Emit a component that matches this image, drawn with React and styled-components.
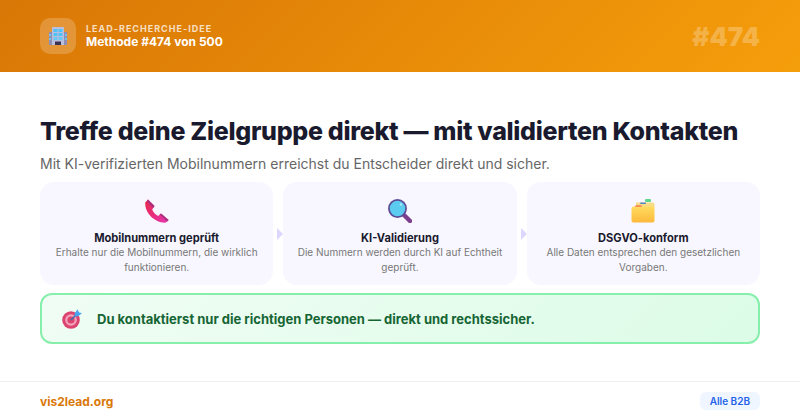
import React from "react";
import styled, { createGlobalStyle } from "styled-components";

const Global = createGlobalStyle`
  * { box-sizing: border-box; }
  html, body { margin: 0; padding: 0; background: #fff; }
  body { font-family: Inter, "Liberation Sans", sans-serif; }
`;

const BuildingIcon = () => (
  <svg width="20" height="20" viewBox="0 0 20 20">
    <rect x="1" y="6" width="18" height="13" fill="#8d8fb5" />
    <rect x="4" y="1" width="12" height="18" rx="0.5" fill="#b9bfdc" />
    <rect x="1" y="8" width="2" height="2" fill="#6fc3ee" />
    <rect x="1" y="12" width="2" height="2" fill="#6fc3ee" />
    <rect x="17" y="8" width="2" height="2" fill="#6fc3ee" />
    <rect x="17" y="12" width="2" height="2" fill="#6fc3ee" />
    <rect x="5.5" y="3" width="4" height="3" fill="#4fc3f7" />
    <rect x="10.5" y="3" width="4" height="3" fill="#4fc3f7" />
    <rect x="5.5" y="7" width="4" height="3" fill="#4fc3f7" />
    <rect x="10.5" y="7" width="4" height="3" fill="#4fc3f7" />
    <rect x="5.5" y="11" width="4" height="3" fill="#6cc9f5" />
    <rect x="10.5" y="11" width="4" height="3" fill="#6cc9f5" />
    <rect x="7" y="15.5" width="6" height="3.5" fill="#3b3350" />
  </svg>
);

const PhoneIcon = () => (
  <svg width="24" height="24" viewBox="0 0 24 24">
    <defs>
      <linearGradient id="phoneFill" x1="0" y1="0" x2="1" y2="1">
        <stop offset="0" stopColor="#e8294a" />
        <stop offset="1" stopColor="#e835b0" />
      </linearGradient>
    </defs>
    <path d="M3 .5L9.5 7 7.2 10.6C8.2 13.4 10.4 15.8 13.2 16.9L16 14.4 23.6 21 21 23.6C10 24.4-.4 14 .2 3.4Z" fill="url(#phoneFill)" />
    <path d="M3 .5L9.5 7 8.2 9 1.8 2.2Z" fill="#a8327f" />
    <path d="M16 14.4L23.6 21 22.2 22.4 14.6 15.6Z" fill="#a8327f" />
  </svg>
);

const SearchIcon = () => (
  <svg width="24" height="24" viewBox="0 0 24 24">
    <path d="M16 16L22 22" stroke="#7b3f8e" strokeWidth="4.4" strokeLinecap="round" />
    <circle cx="9.5" cy="9.5" r="8.6" fill="#5bcbf0" stroke="#5c4a96" strokeWidth="1.7" />
    <circle cx="13" cy="5.5" r="1.2" fill="#a8e6fa" />
  </svg>
);

const FolderIcon = () => (
  <svg width="24" height="24" viewBox="0 0 24 24">
    <defs>
      <linearGradient id="folderFill" x1="0" y1="0" x2="0" y2="1">
        <stop offset="0" stopColor="#ffdc60" />
        <stop offset="1" stopColor="#fdb93c" />
      </linearGradient>
    </defs>
    <rect x="14" y="0" width="6" height="3" rx="1" fill="#5ed68e" />
    <path d="M5 3.5H22a1.5 1.5 0 0 1 1.5 1.5V9H5Z" fill="#f7dc85" />
    <rect x="9" y="3.5" width="6" height="1.6" rx="0.8" fill="#4f86c6" />
    <rect x="4" y="6.5" width="7" height="2" rx="1" fill="#ef4d4d" />
    <path d="M.5 9.5A2 2 0 0 1 2.5 7.5H21.5A2 2 0 0 1 23.5 9.5V21.5A2 2 0 0 1 21.5 23.5H2.5A2 2 0 0 1 .5 21.5Z" fill="url(#folderFill)" />
  </svg>
);

const TargetIcon = () => (
  <svg width="20" height="20" viewBox="0 0 20 20">
    <circle cx="9" cy="11" r="8.8" fill="#dc4470" />
    <circle cx="9" cy="11" r="5.8" fill="#f4a3bb" />
    <circle cx="9" cy="11" r="3.6" fill="#dc4470" />
    <path d="M9 11L15.5 4.5" stroke="#3a6ea5" strokeWidth="1.6" />
    <path d="M12.6 4.4L15.6 .2 16.8 3.2 19.9 4.2 15.8 7.6 12.8 7.2Z" fill="#48a4f0" />
  </svg>
);

const steps = [
  { icon: <PhoneIcon />, title: "Mobilnummern geprüft", text: "Erhalte nur die Mobilnummern, die wirklich funktionieren." },
  { icon: <SearchIcon />, title: "KI-Validierung", text: "Die Nummern werden durch KI auf Echtheit geprüft." },
  { icon: <FolderIcon />, title: "DSGVO-konform", text: "Alle Daten entsprechen den gesetzlichen Vorgaben." },
];

const App = () => {
  return (
    <>
      <Global />
      <S.Page>
        <S.Header>
          <S.HeaderLeft>
            <S.IconBox>
              <BuildingIcon />
            </S.IconBox>
            <div>
              <S.Label>LEAD-RECHERCHE-IDEE</S.Label>
              <S.Method>Methode #474 von 500</S.Method>
            </div>
          </S.HeaderLeft>
          <S.Number>#474</S.Number>
        </S.Header>
        <S.Main>
          <S.Title>Treffe deine Zielgruppe direkt — mit validierten Kontakten</S.Title>
          <S.Sub>Mit KI-verifizierten Mobilnummern erreichst du Entscheider direkt und sicher.</S.Sub>
          <S.Cards>
            {steps.map((s) => (
              <S.Card key={s.title}>
                <S.CardIcon>{s.icon}</S.CardIcon>
                <S.CardTitle>{s.title}</S.CardTitle>
                <S.CardText>{s.text}</S.CardText>
              </S.Card>
            ))}
          </S.Cards>
          <S.Result>
            <TargetIcon />
            <S.ResultText>Du kontaktierst nur die richtigen Personen — direkt und rechtssicher.</S.ResultText>
          </S.Result>
        </S.Main>
        <S.Footer>
          <S.Brand>vis2lead.org</S.Brand>
          <S.Tag>Alle B2B</S.Tag>
        </S.Footer>
      </S.Page>
    </>
  );
};

export default App;

const S = {
  Page: styled.div`
    width: 800px;
    height: 420px;
    display: flex;
    flex-direction: column;
    overflow: hidden;
    background: #fff;
  `,
  Header: styled.header`
    height: 72px;
    padding: 0 40px;
    display: flex;
    align-items: center;
    justify-content: space-between;
    background: linear-gradient(135deg, #d97706, #f59e0b);
  `,
  HeaderLeft: styled.div`
    display: flex;
    align-items: center;
    gap: 10px;
  `,
  IconBox: styled.div`
    width: 36px;
    height: 36px;
    border-radius: 10px;
    background: rgba(255, 255, 255, 0.2);
    display: flex;
    align-items: center;
    justify-content: center;
  `,
  Label: styled.div`
    font-size: 9px;
    font-weight: 700;
    letter-spacing: 1px;
    line-height: 11px;
    color: rgba(255, 255, 255, 0.75);
  `,
  Method: styled.div`
    margin-bottom: 1px;
    font-size: 12px;
    font-weight: 700;
    line-height: 15px;
    color: #fff;
  `,
  Number: styled.div`
    font-size: 26px;
    font-weight: 900;
    color: rgba(255, 255, 255, 0.25);
  `,
  Main: styled.main`
    flex: 1;
    padding: 44px 40px 0;
  `,
  Title: styled.h1`
    margin: 0;
    font-size: 25px;
    font-weight: 800;
    letter-spacing: -0.3px;
    line-height: 30px;
    color: #1a1a2e;
  `,
  Sub: styled.p`
    margin: 8px 0 0;
    font-size: 14px;
    line-height: 20px;
    color: #666;
  `,
  Cards: styled.div`
    margin-top: 8px;
    display: grid;
    grid-template-columns: repeat(3, 1fr);
    gap: 10px;
  `,
  Card: styled.div`
    position: relative;
    height: 103px;
    padding: 17px 14px 0;
    border-radius: 14px;
    background: #f8f7ff;
    text-align: center;
    &:not(:last-child)::after {
      content: "";
      position: absolute;
      right: -10px;
      top: 46px;
      border-left: 6px solid #ddd6fe;
      border-top: 6px solid transparent;
      border-bottom: 6px solid transparent;
    }
  `,
  CardIcon: styled.div`
    height: 24px;
    display: flex;
    justify-content: center;
  `,
  CardTitle: styled.div`
    margin-top: 8px;
    font-size: 11.1px;
    font-weight: 700;
    line-height: 14px;
    color: #1a1a2e;
  `,
  CardText: styled.div`
    font-size: 10px;
    line-height: 14.5px;
    color: #777;
  `,
  Result: styled.div`
    margin-top: 8px;
    height: 51px;
    padding: 0 20px;
    display: flex;
    align-items: center;
    gap: 15px;
    border: 2px solid #86efac;
    border-radius: 12px;
    background: linear-gradient(135deg, #f0fdf4, #dcfce7);
  `,
  ResultText: styled.div`
    font-size: 13px;
    font-weight: 700;
    color: #166534;
  `,
  Footer: styled.footer`
    height: 39px;
    padding: 0 40px;
    display: flex;
    align-items: center;
    justify-content: space-between;
    border-top: 1px solid #f0f0f0;
  `,
  Brand: styled.div`
    font-size: 12px;
    font-weight: 700;
    color: #d97706;
  `,
  Tag: styled.div`
    height: 18px;
    padding: 0 10px;
    display: flex;
    align-items: center;
    border-radius: 6px;
    background: #eff6ff;
    font-size: 10px;
    font-weight: 600;
    color: #2563eb;
  `,
};
